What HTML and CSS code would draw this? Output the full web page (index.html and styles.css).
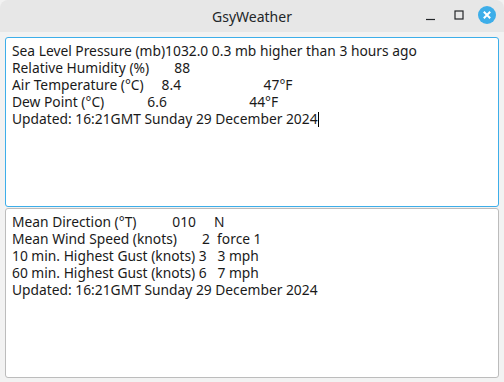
FILE: index.html
```html
<!DOCTYPE html>
<html lang="en">
<head>
  <meta charset="UTF-8"/>
  <title>GsyWeather</title>
  <link rel="stylesheet" href="styles.css">
</head>
<body>
<div class="window">
  <div class="titlebar">
    <span class="title">GsyWeather</span>
    <div class="win-buttons">
      <button class="win-button minimize" title="Minimize">
        <svg width="12" height="12" viewBox="0 0 12 12"><path d="M1 10.5h9" stroke="#232629" stroke-width="1.2"/></svg>
      </button>
      <button class="win-button maximize" title="Maximize">
        <svg width="12" height="12" viewBox="0 0 12 12"><rect x="2" y="2" width="8" height="8" fill="none" stroke="#232629" stroke-width="1.2"/></svg>
      </button>
      <button class="win-button close" title="Close">
        <svg width="18" height="18" viewBox="0 0 18 18"><circle cx="9" cy="9" r="9" fill="#3daee9"/><path d="M5.8 5.8l6.4 6.4M12.2 5.8l-6.4 6.4" stroke="#fff" stroke-width="2"/></svg>
      </button>
    </div>
  </div>

  <div class="content">
    <div class="panel focused">
      <div class="line">Sea Level Pressure (mb)1032.0 0.3 mb higher than 3 hours ago</div>
      <div class="line">Relative Humidity (%)       88</div>
      <div class="line">Air Temperature (°C)     8.4                       47°F</div>
      <div class="line">Dew Point (°C)            6.6                       44°F</div>
      <div class="line">Updated: 16:21GMT Sunday 29 December 2024<span class="caret"></span></div>
    </div>
    <div class="panel">
      <div class="line">Mean Direction (°T)          010     N</div>
      <div class="line">Mean Wind Speed (knots)       2  force 1</div>
      <div class="line">10 min. Highest Gust (knots) 3   3 mph</div>
      <div class="line">60 min. Highest Gust (knots) 6   7 mph</div>
      <div class="line">Updated: 16:21GMT Sunday 29 December 2024</div>
    </div>
  </div>
</div>
</body>
</html>
```

FILE: styles.css
```css
html, body {
    margin: 0;
    height: 100%;
}
body {
    font-family: "Noto Sans", sans-serif;
    background: #f2f2f2;
    color: #232629;
}
.window {
    display: flex;
    flex-direction: column;
    height: 100%;
}
.titlebar {
    height: 32px;
    background: #e7e7e7;
    border-radius: 8px 8px 0 0;
    display: flex;
    align-items: center;
    justify-content: center;
    position: relative;
    flex-shrink: 0;
}
.title {
    font-size: 14px;
    color: #232629;
}
.win-buttons {
    position: absolute;
    right: 8px;
    top: 6px;
    display: flex;
    align-items: center;
    gap: 10px;
}
.win-button {
    border: none;
    background: none;
    padding: 0;
    width: 18px;
    height: 18px;
    display: flex;
    align-items: center;
    justify-content: center;
}
.content {
    flex: 1;
    display: flex;
    flex-direction: column;
    padding: 5px 5px 4px 5px;
}
.panel {
    flex: 1;
    background: #fff;
    border: 1px solid #bcbcbc;
    border-radius: 3px;
    padding: 4px 6px 3px;
    font-size: 13.8px;
    line-height: 17px;
    color: #1a1a1a;
}
.panel.focused {
    border-color: #3daee9;
    margin-bottom: 1px;
}
.line {
    white-space: pre;
}
.caret {
    display: inline-block;
    width: 1px;
    height: 15px;
    background: #000;
    vertical-align: -3px;
}
```
